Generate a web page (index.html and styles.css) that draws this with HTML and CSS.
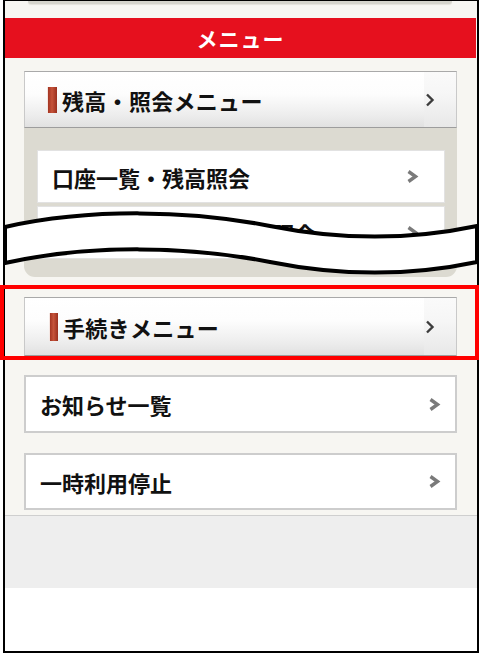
FILE: index.html
```html
<!DOCTYPE html>
<html lang="ja">
<head>
<meta charset="utf-8">
<title>メニュー</title>
<link rel="stylesheet" href="styles.css">
</head>
<body>
<div class="frame">
  <div class="main">
    <div class="card-stub"></div>
    <div class="menubar">メニュー</div>
    <div class="section">
      <div class="hdr">
        <span class="mark"></span>
        <span class="hdr-label">残高・照会メニュー</span>
        <span class="hdr-arrow"><svg width="10" height="14" viewBox="0 0 10 14"><polyline points="2,1.5 7.5,7 2,12.5" fill="none" stroke="#3c3c3c" stroke-width="2.4"/></svg></span>
      </div>
      <div class="panel">
        <div class="item"><span>口座一覧・残高照会</span><svg class="chev" width="13" height="13" viewBox="0 0 13 13"><polyline points="2.5,1.5 9.5,6.5 2.5,11.5" fill="none" stroke="#7a7a7a" stroke-width="3.4"/></svg></div>
        <div class="item"><span>投資信託・公共債残高照会</span><svg class="chev" width="13" height="13" viewBox="0 0 13 13"><polyline points="2.5,1.5 9.5,6.5 2.5,11.5" fill="none" stroke="#7a7a7a" stroke-width="3.4"/></svg></div>
      </div>
    </div>
    <div class="hdr hdr2">
      <span class="mark"></span>
      <span class="hdr-label">手続きメニュー</span>
      <span class="hdr-arrow"><svg width="10" height="14" viewBox="0 0 10 14"><polyline points="2,1.5 7.5,7 2,12.5" fill="none" stroke="#3c3c3c" stroke-width="2.4"/></svg></span>
    </div>
    <div class="link link1"><span>お知らせ一覧</span><svg class="chev" width="13" height="13" viewBox="0 0 13 13"><polyline points="2.5,1.5 9.5,6.5 2.5,11.5" fill="none" stroke="#7a7a7a" stroke-width="3.4"/></svg></div>
    <div class="link link2"><span>一時利用停止</span><svg class="chev" width="13" height="13" viewBox="0 0 13 13"><polyline points="2.5,1.5 9.5,6.5 2.5,11.5" fill="none" stroke="#7a7a7a" stroke-width="3.4"/></svg></div>
  </div>
  <div class="footer-gray"></div>
</div>
<svg class="wave" width="480" height="85" viewBox="0 200 480 85">
  <path d="M5,227 C90,208 190,210 270,226 C350,242 420,238 477,226 L477,262 C420,274 350,278 270,262 C190,246 90,244 5,263 Z" fill="#fff" stroke="#000" stroke-width="4"/>
</svg>
<div class="highlight"></div>
</body>
</html>
```
FILE: styles.css
```css
html, body {
  margin: 0;
  padding: 0;
  background: #fff;
}
body {
  font-family: "Noto Sans CJK JP", "Noto Sans", sans-serif;
  position: relative;
  width: 480px;
  height: 653px;
  overflow: hidden;
}
.frame {
  margin-left: 3px;
  width: 472px;
  height: 650px;
  border: 2px solid #000;
  border-top-width: 1px;
  background: #fff;
}
.main {
  background: #f7f6f2;
  display: flex;
  flex-direction: column;
  padding-bottom: 5px;
  border-bottom: 1px solid #cfcfcf;
}
.card-stub {
  height: 3px;
  margin: 0 25px 0 23px;
  background: #d5d4cc;
  border-radius: 0 0 8px 8px;
  box-shadow: 0 1px 1px #e4e3dc;
}
.menubar {
  margin-top: 14px;
  height: 40px;
  background: #e6101e;
  color: #fff;
  font-weight: 600;
  font-size: 21px;
  line-height: 40px;
  text-align: center;
  letter-spacing: 1px;
  margin-right: 1px;
}
.section {
  margin: 13px 20px 0 19px;
}
.hdr {
  height: 57px;
  box-sizing: border-box;
  border: 1px solid #c9c9c9;
  border-top-color: #a9a9a9;
  border-bottom-color: #9d9d9d;
  background: linear-gradient(to bottom, #ffffff 0%, #fdfdfd 40%, #ececec 80%, #e1e1e1 100%);
  display: flex;
  align-items: center;
  padding-left: 22px;
}
.mark {
  width: 10px;
  height: 26px;
  background: linear-gradient(to right, #f4e6e2 0, #f4e6e2 1px, #a43522 1px, #c5533a 50%, #9a2f1e 100%);
  margin-right: 5px;
}
.hdr-label {
  font-size: 22px;
  font-weight: 600;
  color: #111;
  flex: 1;
  letter-spacing: 0.3px;
}
.hdr-arrow {
  width: 31px;
  align-self: stretch;
  display: flex;
  align-items: center;
  justify-content: flex-start;
  padding-left: 1px;
  background: linear-gradient(to bottom, #fafafa 0%, #f6f6f6 40%, #e8e8e8 100%);
}
.panel {
  background: #dcdad1;
  padding: 22px 12px 18px 13px;
  border-radius: 0 0 11px 11px;
  display: flex;
  flex-direction: column;
  gap: 3px;
}
.item {
  height: 53px;
  box-sizing: border-box;
  background: #fff;
  border: 1px solid #e2e2e2;
  display: flex;
  align-items: center;
  padding: 0 25px 0 14px;
  font-size: 22px;
  font-weight: 600;
  color: #111;
}
.item span, .link span {
  flex: 1;
}
.hdr2 {
  margin: 20px 20px 0 19px;
  height: 59px;
  padding-left: 24px;
}
.hdr2 .mark {
  width: 9px;
  height: 28px;
}
.link {
  margin: 0 20px 0 19px;
  box-sizing: border-box;
  background: #fff;
  border: 2px solid #cdcdcd;
  display: flex;
  align-items: center;
  padding: 0 14px 0 14px;
  font-size: 22px;
  font-weight: 600;
  color: #111;
}
.link1 {
  margin-top: 19px;
  height: 58px;
}
.link2 {
  margin-top: 20px;
  height: 57px;
}
.footer-gray {
  height: 72px;
  background: #eeeeee;
}
.wave {
  position: absolute;
  top: 200px;
  left: 0;
}
.highlight {
  position: absolute;
  top: 285px;
  left: 0;
  width: 479px;
  height: 75px;
  box-sizing: border-box;
  border: 4px solid #ff0000;
}
```
